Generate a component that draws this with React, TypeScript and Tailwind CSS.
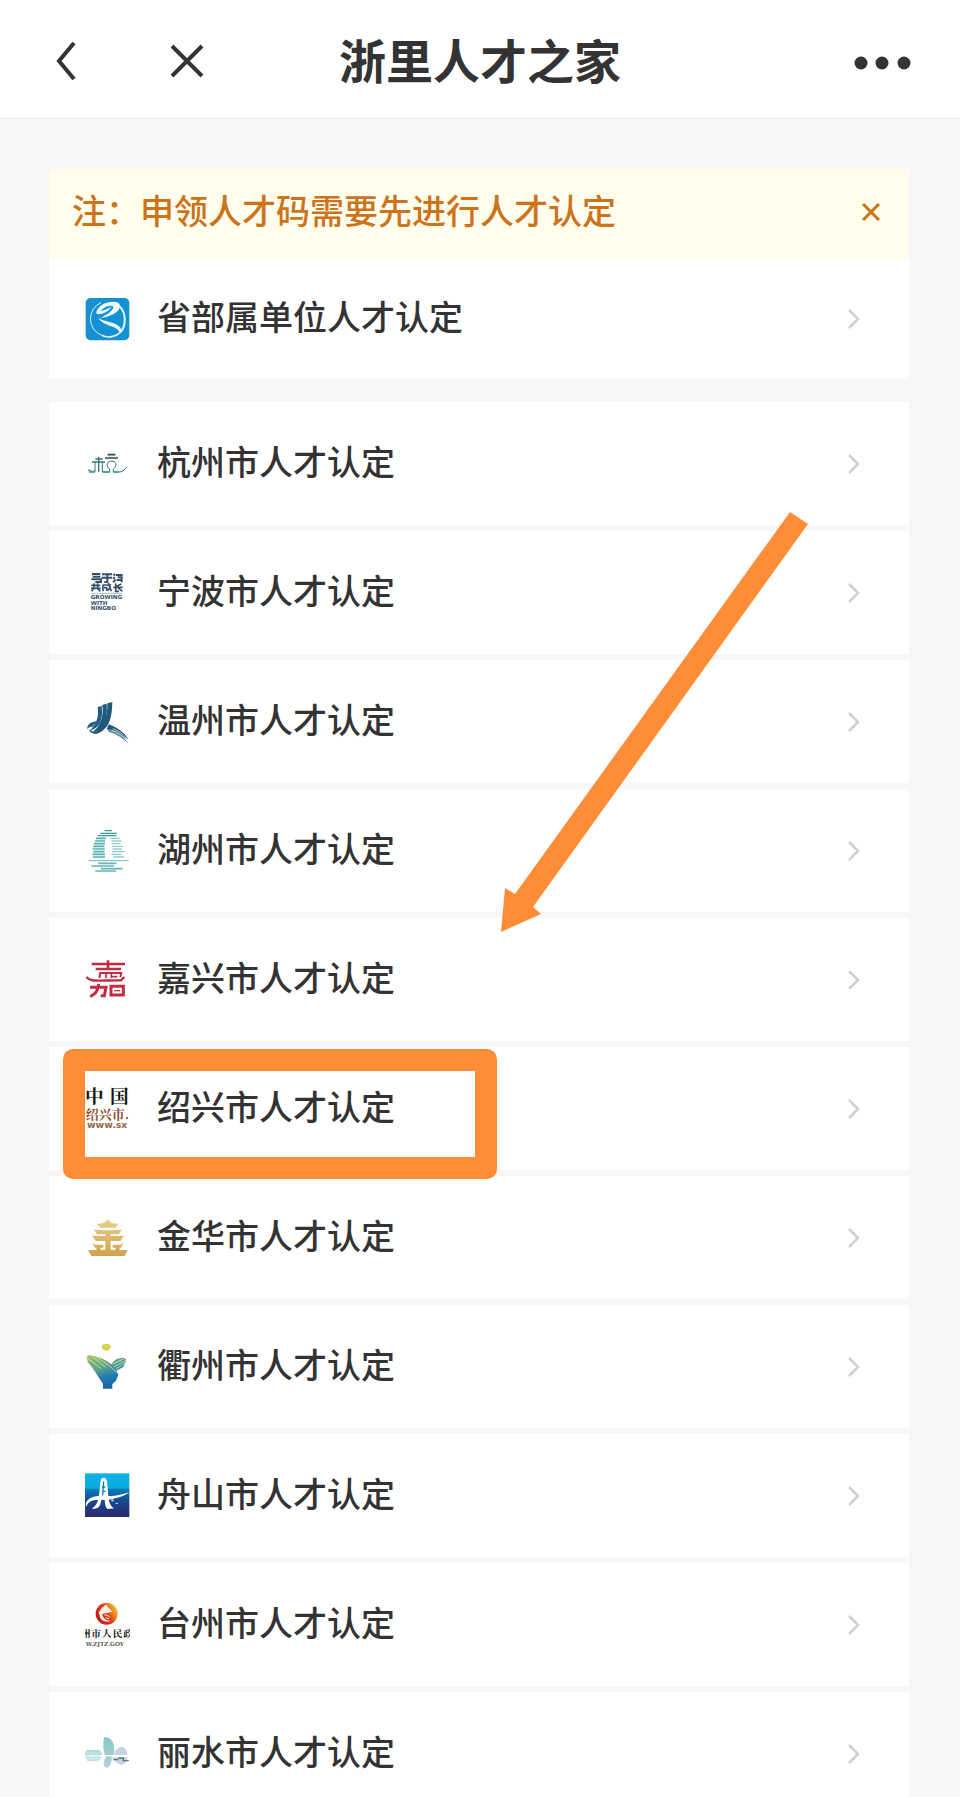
import { useState, type ReactNode } from "react";

function Logo({ viewBox, children }: { viewBox: string; children: ReactNode }) {
  return (
    <svg viewBox={viewBox} className="size-[45px] shrink-0" aria-hidden="true">
      {children}
    </svg>
  );
}

const ProvinceLogo = () => (
  <Logo viewBox="134 81 135 135">
    <rect x="136" y="84" width="131" height="127" rx="15" fill="#1590d2" />
    <path d="M182 98 A53 53 0 0 0 184 196" fill="none" stroke="#dff6ff" strokeWidth="3" />
    <path d="M184 196 C204 206 228 200 241 186" fill="none" stroke="#dff6ff" strokeWidth="5" />
    <path d="M238 109 C258 130 258 166 241 186" fill="none" stroke="#dff6ff" strokeWidth="6" />
    <path d="M169 124 C176 101 212 89 234 98 C247 110 233 127 211 136 C199 142 188 144 181 143 C199 135 221 119 219 110 C211 103 190 111 181 123 C192 122 205 116 214 109 C207 124 187 134 172 133 C168 132 167 128 169 124Z" fill="#eafaff" />
    <path d="M174 143 C190 158 238 152 245 184 L239 188 C229 164 188 170 174 143Z" fill="#eafaff" />
  </Logo>
);

const HangzhouLogo = () => (
  <Logo viewBox="45 33 135 135">
    <g fill="none" stroke="#2f7478" strokeWidth="3">
      <path d="M76 87 H98 M86 80 V125 M66 96 H105" strokeWidth="4" />
      <path d="M75 98 V126 H57 M97 98 V126 H119 V117 C108 112 110 96 121 94 H129 C141 97 140 112 130 117 V126 H150 C160 124 166 117 170 111" />
      <path d="M113 74 H136 M105 84 H144" stroke="#244f55" strokeWidth="5" />
      <path d="M55 119 C61 128 66 124 75 125 M98 126 H119 M131 126 H146" stroke="#49a49a" strokeWidth="6" />
    </g>
  </Logo>
);

const NingboLogo = () => (
  <Logo viewBox="45 60 135 135">
    <g fill="none" stroke="#37506a" strokeWidth="6">
      <path d="M66 72 H91 M68 80 H91 M64 88 H93 V96 H76 M96 73 H126 M95 83 H126 M112 76 V96 H103 M130 72 L136 76 M129 82 L135 86 M129 97 L137 89 M138 75 H158 M143 82 H155 V97 M140 90 H157" />
      <path d="M64 106 H91 M72 100 V118 M83 100 V118 M63 115 H92 M70 116 L65 124 M83 116 L91 124 M98 105 H124 M99 105 V124 M102 113 H110 V122 M115 99 L124 124 M122 110 L112 123 M130 112 H158 M137 100 V124 H147 M154 102 L140 109 M143 112 L157 124" strokeWidth="5" />
      <path d="M64 130 H157" stroke="#8795a2" strokeWidth="2" />
    </g>
    <g fill="#37506a" fontFamily="DejaVu Sans" fontWeight="bold" fontSize="17">
      <text x="62" y="147">GROWING</text>
      <text x="62" y="164">WITH</text>
      <text x="62" y="181">NINGBO</text>
    </g>
  </Logo>
);

const WenzhouLogo = () => (
  <Logo viewBox="45 57 135 135">
    <path d="M83 81 L95 78 C97 100 97 112 91 126 C86 138 73 149 60 152 C76 134 88 116 83 81Z" fill="#1d5f86" />
    <path d="M97 75 L110 71 C112 102 109 121 99 138 C91 149 80 157 65 158 C90 141 102 113 97 75Z" fill="#1d587c" />
    <path d="M112 70 L127 66 C126 105 121 128 107 143 C97 155 83 163 70 162 C96 144 114 113 112 70Z" fill="#235878" />
    <path d="M51 147 C53 129 66 123 90 124 L88 132 C73 131 66 135 72 141 C60 139 56 143 51 147Z M57 149 C61 161 72 163 84 157 C74 158 66 156 62 150Z" fill="#236286" />
    <path d="M116 133 C142 143 164 157 175 179 C157 168 136 158 110 148Z" fill="#1d587c" />
    <path d="M115 147 C143 151 162 164 174 190 C162 177 143 163 115 155Z" fill="#5c8b9d" />
    <path d="M128 146 C147 153 160 162 174 181 M124 151 C145 157 158 168 171 183" fill="none" stroke="#fff" strokeWidth="2" />
  </Logo>
);

const HuzhouLogo = () => (
  <Logo viewBox="45 444 135 135">
    <g fill="none" strokeWidth="5">
      <path d="M104 452 H126 M91 460 H141 M84 467 H139" stroke="#3a989f" strokeWidth="4" />
      <path d="M78 475 H108 M75 483 H105 M72 491 H105 M70 499 H103 M68 507 H104 M70 515 H103 M67 523 H105 M69 531 H105" stroke="#4fb1b2" />
      <path d="M121 475 H151 M124 483 H154 M125 491 H151 M126 499 H158 M128 507 H156 M126 515 H164 M125 523 H154 M130 531 H162" stroke="#91cecb" strokeWidth="4" />
      <path d="M55 542 H176" stroke="#72b8ba" strokeWidth="3" />
      <path d="M85 550 H139 M64 558 H132 M93 566 H158 M76 573 H138" stroke="#65b6b7" />
    </g>
  </Logo>
);

const JiaxingLogo = () => (
  <Logo viewBox="45 21 135 135">
    <g fill="none" stroke="#c22d42" strokeWidth="8">
      <path d="M65 42 H165 M114 31 V57 M77 57 H153" />
      <path d="M88 84 L91 69 H154 L151 82" strokeWidth="6" />
      <path d="M49 81 C62 96 75 91 153 91 L163 81" strokeWidth="7" />
      <path d="M108 71 V84 M124 71 V84 M124 80 H142" strokeWidth="5" />
      <path d="M60 112 H108 L103 137 H92 M86 102 C84 123 77 131 61 140" strokeWidth="9" />
      <path d="M123 109 H160 V135 H123 Z" strokeWidth="9" />
      <path d="M133 122 H150" strokeWidth="4" />
    </g>
  </Logo>
);

const ShaoxingLogo = () => (
  <Logo viewBox="45 408 135 135">
    <g fontFamily="'Noto Serif CJK SC', 'Noto Sans CJK SC', serif" fontWeight="bold">
      <text x="45" y="459" fontSize="56" fill="#171515">中</text>
      <text x="120" y="459" fontSize="56" fill="#171515">国</text>
      <text x="47" y="508" fontSize="39" fill="#8d5035">绍兴市.</text>
    </g>
    <text x="51" y="535" fontFamily="DejaVu Sans" fontWeight="bold" fontSize="28" fill="#93664c">www.sx</text>
  </Logo>
);

const JinhuaLogo = () => (
  <Logo viewBox="45 45 135 135">
    <defs>
      <linearGradient id="jinhua" x1="0" y1="0" x2="0" y2="1">
        <stop stopColor="#e9cf89" />
        <stop offset="1" stopColor="#d2a24e" />
      </linearGradient>
    </defs>
    <path fill="url(#jinhua)" d="M113 57 C118 67 129 72 145 71 L136 83 H91 L80 71 C98 72 108 67 113 57Z M71 88 C82 92 146 92 156 88 L146 103 H122 V108 H155 L163 105 L152 123 H122 V149 H137 V143 H128 V134 H153 L161 127 L153 143 H149 V150 H173 L164 168 H64 L54 150 H79 V143 H75 L65 127 L73 134 H100 V143 H91 V149 H106 V123 H77 L65 105 L73 108 H106 V103 H82Z" />
  </Logo>
);

const QuzhouLogo = () => (
  <Logo viewBox="45 432 135 135">
    <defs>
      <linearGradient id="quzhou" x1="0" y1="0" x2=".4" y2="1">
        <stop stopColor="#a9c565" />
        <stop offset=".45" stopColor="#5aa184" />
        <stop offset=".75" stopColor="#1f7ab5" />
        <stop offset="1" stopColor="#1b67a0" />
      </linearGradient>
    </defs>
    <path d="M95 440 C97 428 121 428 123 440 C119 456 99 456 95 440Z" fill="#d8d253" />
    <path fill="url(#quzhou)" d="M50 470 C57 462 70 466 86 472 C105 478 116 488 125 493 C133 478 144 472 164 473 L169 480 L160 501 L139 512 L145 524 L138 542 L127 552 V566 H99 V551 C85 533 78 515 53 486Z" />
    <path d="M53 475 L93 506 M64 467 L107 502 M78 469 L120 499 L139 517 M128 493 L164 475 M132 501 L167 481 M137 507 L166 488" fill="none" stroke="#eff4ce" strokeWidth="2" />
  </Logo>
);

const ZhoushanLogo = () => (
  <Logo viewBox="45 39 135 135">
    <defs>
      <linearGradient id="zhoushan" x1="0" y1="0" x2="0" y2="1">
        <stop stopColor="#10b2e7" />
        <stop offset=".34" stopColor="#0baae0" />
        <stop offset=".36" stopColor="#0880be" />
        <stop offset=".6" stopColor="#174b91" />
        <stop offset="1" stopColor="#2d286e" />
      </linearGradient>
    </defs>
    <rect x="45" y="40" width="133" height="131" fill="url(#zhoushan)" />
    <path fill="#fff" d="M92 60 C97 50 109 52 111 64 L115 108 C137 109 158 103 178 97 C161 109 141 116 116 119 C120 135 126 142 134 145 L112 147 C105 139 105 130 104 119 L94 120 C91 136 89 144 75 146 L65 146 C77 139 83 127 84 120 C66 119 53 126 48 142 C44 120 60 110 87 107Z" />
    <path fill="none" stroke="#1778b7" strokeWidth="4" d="M101 64 L98 106 M96 81 H106 M97 94 H107" />
    <path d="M123 121 H132 M127 117 V125 M136 130 H144" stroke="#a8d5e8" strokeWidth="3" />
  </Logo>
);

const TaizhouLogo = () => (
  <Logo viewBox="45 426 135 135">
    <defs>
      <linearGradient id="taizhou" x1="0" y1=".8" x2="1" y2=".2">
        <stop stopColor="#b51524" />
        <stop offset=".5" stopColor="#df3c20" />
        <stop offset="1" stopColor="#ffd12b" />
      </linearGradient>
    </defs>
    <circle cx="110" cy="461" r="33" fill="url(#taizhou)" />
    <path d="M86 456 C93 452 92 443 101 441 C105 433 111 434 113 441 C119 444 122 452 128 455 L97 462 C98 474 108 483 122 482 C103 490 89 479 88 463Z" fill="#fff3dc" />
    <path d="M103 466 C110 462 113 468 119 471 M107 473 L117 477" fill="none" stroke="#fff3dc" strokeWidth="3" />
    <g fontFamily="'Noto Serif CJK SC', 'Noto Sans CJK SC', serif" fontWeight="bold" fontSize="29" fill="#171515">
      <text x="33" y="531">州</text>
      <text x="64" y="531">市</text>
      <text x="96" y="531">人</text>
      <text x="128" y="531">民</text>
      <text x="160" y="531">政</text>
    </g>
    <text x="47" y="559" fontFamily="DejaVu Serif" fontWeight="bold" fontSize="17" fill="#555">W.ZJTZ.GOV</text>
  </Logo>
);

const LishuiLogo = () => (
  <Logo viewBox="45 48 135 135">
    <defs>
      <linearGradient id="lishui" x1="0" y1="0" x2="0" y2="1">
        <stop stopColor="#86c8c1" />
        <stop offset="1" stopColor="#b8cfdd" />
      </linearGradient>
    </defs>
    <path d="M50 105 H88 L96 114 V121 H43Z" fill="#abdcd7" />
    <path d="M45 124 H97 L87 139 H53Z" fill="#c5e3e7" />
    <path d="M48 114 H92 M52 131 H87 M63 109 V137" stroke="#d7efed" strokeWidth="2" />
    <path d="M104 66 C126 64 138 91 130 119 L125 126 C126 145 119 158 109 158 C99 155 99 139 108 126 C99 112 97 75 104 66Z" fill="url(#lishui)" />
    <path d="M131 119 C135 104 146 94 158 96 C169 100 171 109 173 120 H145Z M125 127 H173 C172 140 165 148 155 149 C141 148 132 137 125 127Z" fill="#c4d3e6" />
    <path d="M91 122 H180" stroke="#fff" strokeWidth="4" />
    <path d="M130 134 H145 M145 129 H160 V137 H176" fill="none" stroke="#55757b" strokeWidth="4" />
  </Logo>
);

const cities = [
  { name: "杭州市人才认定", logo: <HangzhouLogo /> },
  { name: "宁波市人才认定", logo: <NingboLogo /> },
  { name: "温州市人才认定", logo: <WenzhouLogo /> },
  { name: "湖州市人才认定", logo: <HuzhouLogo /> },
  { name: "嘉兴市人才认定", logo: <JiaxingLogo /> },
  { name: "绍兴市人才认定", logo: <ShaoxingLogo />, highlighted: true },
  { name: "金华市人才认定", logo: <JinhuaLogo /> },
  { name: "衢州市人才认定", logo: <QuzhouLogo /> },
  { name: "舟山市人才认定", logo: <ZhoushanLogo /> },
  { name: "台州市人才认定", logo: <TaizhouLogo /> },
  { name: "丽水市人才认定", logo: <LishuiLogo /> },
];

function Entry({ name, logo, highlighted = false }: { name: string; logo: ReactNode; highlighted?: boolean }) {
  return (
    <a href="#" className="relative flex h-full items-center bg-white pr-[49px] pl-[36px]">
      {logo}
      <span className="ml-[27px] flex-1 pb-1.5 text-[34px] leading-[48px] font-medium text-[#333]">{name}</span>
      <svg viewBox="0 0 12 20" className="h-5 w-3" fill="none" stroke="#d0d0d0" strokeWidth="2.5" aria-hidden="true">
        <path d="M1 1 L10 10 L1 19" />
      </svg>
      {highlighted && (
        <span className="absolute top-[2px] left-[14px] z-10 h-[130px] w-[434px] rounded-[10px] border-[22px] border-[#ff8c37]" />
      )}
    </a>
  );
}

export default function App() {
  const [noticeOpen, setNoticeOpen] = useState(true);
  return (
    <div
      lang="zh-CN"
      className="flex h-screen flex-col bg-[#f7f7f7] font-['Noto_Sans_CJK_SC',sans-serif]"
    >
      <header className="grid h-[119px] shrink-0 grid-cols-[1fr_auto_1fr] items-center border-b border-[#ededed] bg-white px-[48px] pt-1">
        <div className="flex items-center gap-[94px] pl-2">
          <button type="button" aria-label="返回">
            <svg viewBox="0 0 20 38" className="h-[38px] w-5" fill="none" stroke="#333" strokeWidth="4">
              <path d="M18 1 L3 19 L18 37" />
            </svg>
          </button>
          <button type="button" aria-label="关闭">
            <svg viewBox="0 0 34 34" className="size-[34px]" fill="none" stroke="#333" strokeWidth="4">
              <path d="M2 2 L32 32 M32 2 L2 32" />
            </svg>
          </button>
        </div>
        <h1 className="pb-1 text-[47px] leading-[64px] font-bold text-[#333]">浙里人才之家</h1>
        <button type="button" aria-label="更多" className="justify-self-end pt-1">
          <svg viewBox="0 0 58 14" className="h-[14px] w-[58px]" fill="#333">
            <circle cx="7" cy="7" r="6.5" />
            <circle cx="28" cy="7" r="6.5" />
            <circle cx="50" cy="7" r="6.5" />
          </svg>
        </button>
      </header>

      <main className="min-h-0 flex-1 overflow-y-auto pt-[50px] pr-[51px] pl-[49px] [scrollbar-width:none]">
        {noticeOpen && (
          <div className="flex h-[90px] items-center justify-between bg-[#fffdeb] pr-[29px] pb-1 pl-[23px] text-[#cc731c]">
            <p className="pb-1 text-[34px] leading-[48px] font-medium">注：申领人才码需要先进行人才认定</p>
            <button type="button" aria-label="关闭提示" onClick={() => setNoticeOpen(false)}>
              <svg viewBox="0 0 18 18" className="size-[18px]" fill="none" stroke="currentColor" strokeWidth="3">
                <path d="M1 1 L17 17 M17 1 L1 17" />
              </svg>
            </button>
          </div>
        )}
        <div className="h-[120px]">
          <Entry name="省部属单位人才认定" logo={<ProvinceLogo />} />
        </div>

        <div className="relative mt-[23px]">
          <ul className="flex flex-col gap-[6px]">
            {cities.map((city) => (
              <li key={city.name} className="h-[123px]">
                <Entry {...city} />
              </li>
            ))}
          </ul>
          <svg
            viewBox="0 0 308 420"
            className="pointer-events-none absolute top-[110px] left-[452px] h-[420px] w-[308px]"
            fill="#ff8c37"
            aria-hidden="true"
          >
            <path d="M289 0 L307 12 L32 395 L40 402 L0 420 L4 376 L14 382 Z" />
          </svg>
        </div>
      </main>
    </div>
  );
}
